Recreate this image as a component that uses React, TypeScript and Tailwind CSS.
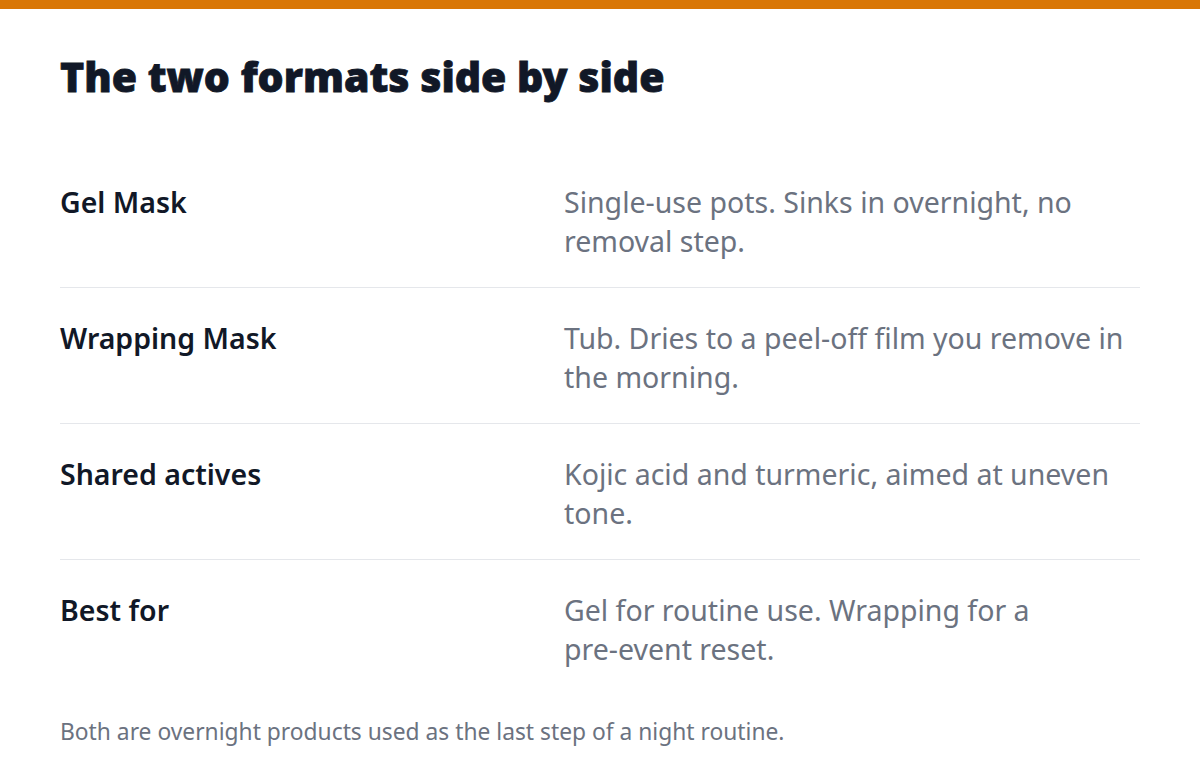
const rows = [
  { label: 'Gel Mask', text: 'Single-use pots. Sinks in overnight, no removal step.' },
  { label: 'Wrapping Mask', text: 'Tub. Dries to a peel-off film you remove in the morning.' },
  { label: 'Shared actives', text: 'Kojic acid and turmeric, aimed at uneven tone.' },
  { label: 'Best for', text: 'Gel for routine use. Wrapping for a', tail: 'pre-event reset.' },
]

export default function App() {
  return (
    <div className="min-h-[780px] w-full bg-white font-['Noto_Sans',sans-serif]">
      <div className="h-[9px] bg-[#d97706]" />
      <div className="px-[60px] pt-[43px]">
        <h1 className="text-[41px] leading-[48px] font-black text-[#111827] [-webkit-text-stroke:0.8px_#111827]">
          The two formats side by side
        </h1>
        <div className="mt-[52px]">
          {rows.map((r, i) => (
            <div
              key={r.label}
              className={`grid grid-cols-[504px_1fr] pt-[31px] pb-[27px] ${i < rows.length - 1 ? 'border-b border-[#e5e7eb]' : ''}`}
            >
              <div className="text-[28.5px] leading-[38.5px] font-semibold text-[#111827]">{r.label}</div>
              <div className="text-[28.5px] leading-[38.5px] text-[#6b7280]">
                {r.text}
                {r.tail && (
                  <>
                    {' '}
                    <span className="whitespace-nowrap">{r.tail}</span>
                  </>
                )}
              </div>
            </div>
          ))}
        </div>
        <p className="mt-[22px] text-[22.8px] leading-[30px] text-[#6b7280]">
          Both are overnight products used as the last step of a night routine.
        </p>
      </div>
    </div>
  )
}
